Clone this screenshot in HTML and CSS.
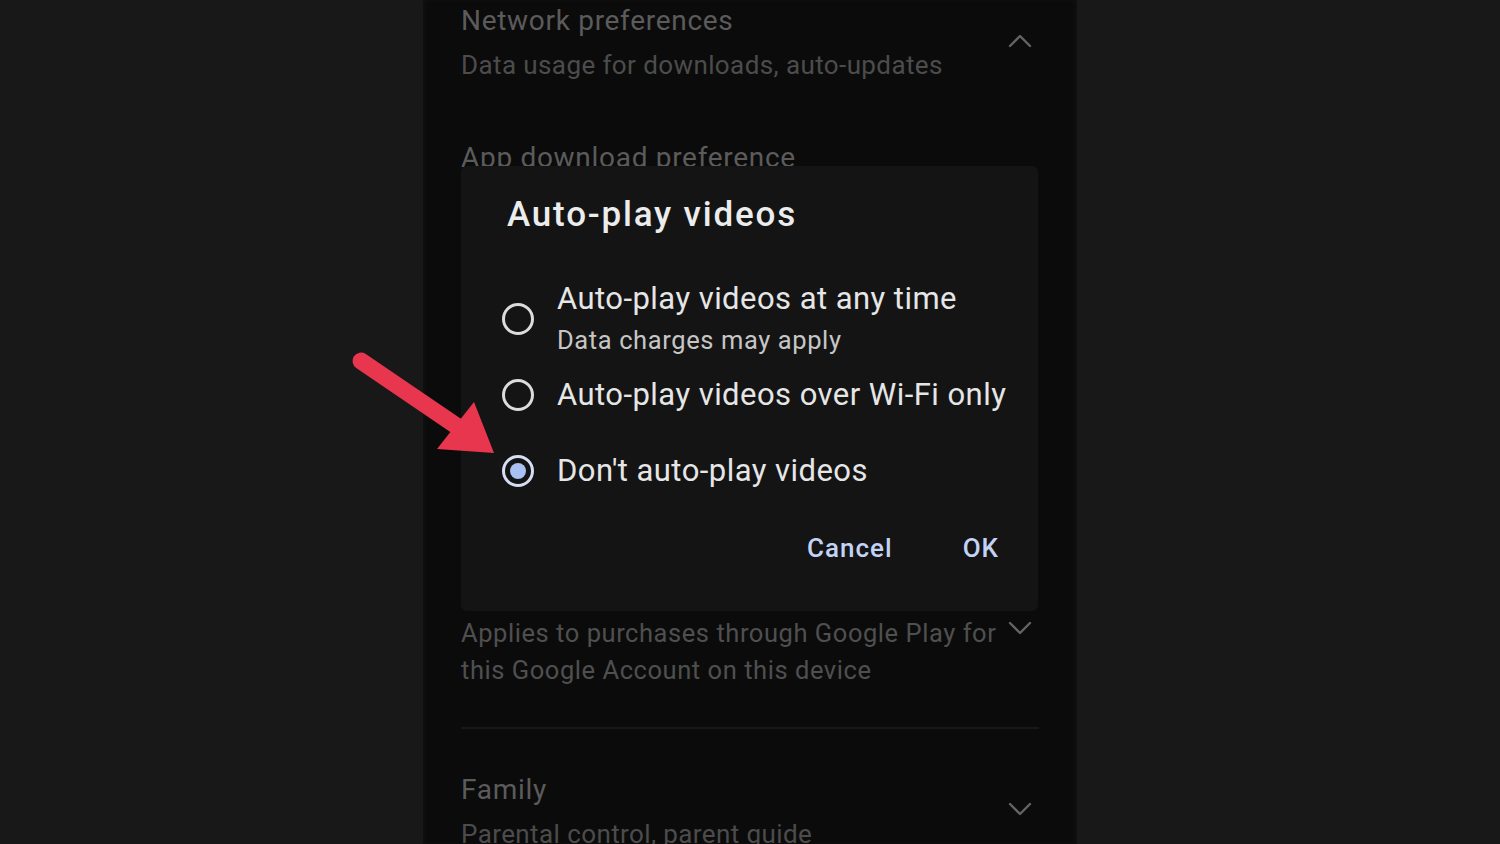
FILE: index.html
```html
<!DOCTYPE html>
<html>
<head>
<meta charset="utf-8">
<link rel="stylesheet" href="styles.css">
</head>
<body>
<div class="stage">
  <div class="phone">
    <div class="row row-net">
      <div class="row-text">
        <div class="bg-title">Network preferences</div>
        <div class="bg-sub">Data usage for downloads, auto-updates</div>
      </div>
      <svg class="chev chev-up" viewBox="0 0 24 14"><path d="M2 12 L12 2 L22 12"/></svg>
    </div>
    <div class="row row-app">
      <div class="row-text">
        <div class="bg-title">App download preference</div>
      </div>
    </div>
    <div class="row row-applies">
      <div class="row-text">
        <div class="bg-sub2">Applies to purchases through Google Play for</div>
        <div class="bg-sub2">this Google Account on this device</div>
      </div>
      <svg class="chev chev-top" viewBox="0 0 24 14"><path d="M2 2 L12 12 L22 2"/></svg>
    </div>
    <div class="divider"></div>
    <div class="row row-family">
      <div class="row-text">
        <div class="bg-title">Family</div>
        <div class="bg-sub">Parental control, parent guide</div>
      </div>
      <svg class="chev chev-fam" viewBox="0 0 24 14"><path d="M2 2 L12 12 L22 2"/></svg>
    </div>

    <div class="dialog">
      <div class="dlg-title">Auto-play videos</div>
      <div class="opt opt1">
        <span class="radio"></span>
        <div class="opt-text">
          <div class="opt-main">Auto-play videos at any time</div>
          <div class="opt-sub">Data charges may apply</div>
        </div>
      </div>
      <div class="opt opt2">
        <span class="radio"></span>
        <div class="opt-text">
          <div class="opt-main">Auto-play videos over Wi-Fi only</div>
        </div>
      </div>
      <div class="opt opt3">
        <span class="radio radio-on"></span>
        <div class="opt-text">
          <div class="opt-main">Don't auto-play videos</div>
        </div>
      </div>
      <div class="actions">
        <span class="btn">Cancel</span>
        <span class="btn">OK</span>
      </div>
    </div>
  </div>
</div>
<svg class="arrow" viewBox="0 0 1500 844" width="1500" height="844">
  <line x1="361" y1="361" x2="458" y2="427" stroke="#e8364f" stroke-width="17" stroke-linecap="round"/>
  <polygon points="437,449 474,402 494,453" fill="#e8364f"/>
</svg>
</body>
</html>
```

FILE: styles.css
```css
* { box-sizing: border-box; }
html, body {
  margin: 0;
  padding: 0;
  width: 1500px;
  height: 844px;
  overflow: hidden;
  background: #181818;
  font-family: Roboto, "Liberation Sans", Arial, sans-serif;
}
.stage {
  display: flex;
  justify-content: center;
  height: 844px;
}
.phone {
  position: relative;
  width: 654px;
  height: 844px;
  background: #0b0b0b;
  box-shadow: inset 3px 0 4px rgba(255,255,255,0.025), inset -3px 0 4px rgba(255,255,255,0.025);
  padding: 0 38px;
  overflow: hidden;
}
.row {
  display: flex;
  align-items: center;
  justify-content: space-between;
  padding-right: 7px;
}
.row-net { margin-top: -1px; }
.row-app { margin-top: 49px; }
.row-applies { margin-top: 435px; align-items: flex-start; }
.row-family { margin-top: 39px; }
.bg-title {
  font-size: 28px;
  line-height: 44px;
  color: #5b5b5b;
  letter-spacing: 0.7px;
  white-space: nowrap;
}
.bg-sub {
  font-size: 26px;
  line-height: 44px;
  color: #4c4c4c;
  letter-spacing: 0.4px;
  white-space: nowrap;
}
.bg-sub2 {
  font-size: 25.5px;
  line-height: 37px;
  color: #4f4f4f;
  letter-spacing: 0.55px;
  white-space: nowrap;
}
.chev {
  width: 24px;
  height: 14px;
  flex: none;
}
.chev path {
  fill: none;
  stroke: #646464;
  stroke-width: 2.4;
  stroke-linecap: round;
  stroke-linejoin: round;
}
.chev-up { margin-top: -4px; }
.chev-top { margin-top: 6px; }
.chev-fam { margin-top: -6px; }
.divider {
  height: 2px;
  background: #181818;
  margin-top: 38px;
}
.dialog {
  position: absolute;
  left: 38px;
  top: 166px;
  width: 577px;
  height: 445px;
  background: #141414;
  border-radius: 6px;
  padding: 29px 0 0 41px;
}
.dlg-title {
  font-size: 35px;
  line-height: 40px;
  font-weight: 500;
  color: #ececec;
  padding-left: 5px;
  letter-spacing: 1.8px;
}
.opt {
  display: flex;
  align-items: center;
  gap: 23px;
}
.opt1 { margin-top: 44px; }
.opt2 { margin-top: 16px; }
.opt3 { margin-top: 36px; }
.radio {
  width: 32px;
  height: 32px;
  border-radius: 50%;
  border: 3px solid #dcdcdc;
  flex: none;
  position: relative;
}
.radio-on {
  border-color: #d6def6;
}
.radio-on::after {
  content: "";
  position: absolute;
  left: 5px;
  top: 5px;
  width: 16px;
  height: 16px;
  border-radius: 50%;
  background: #a9c2f3;
}
.opt-main {
  font-size: 31px;
  line-height: 40px;
  color: #e6e6e6;
  letter-spacing: 0.45px;
  white-space: nowrap;
}
.opt-sub {
  font-size: 25.5px;
  line-height: 38px;
  color: #c6c6c6;
  margin-top: 2px;
  letter-spacing: 0.6px;
  white-space: nowrap;
}
.actions {
  display: flex;
  justify-content: flex-end;
  gap: 70px;
  margin-top: 37px;
  padding-right: 39px;
}
.btn {
  font-size: 26px;
  line-height: 40px;
  font-weight: 500;
  color: #c3d3f5;
  letter-spacing: 1px;
}
.arrow {
  position: absolute;
  left: 0;
  top: 0;
  pointer-events: none;
}
```
